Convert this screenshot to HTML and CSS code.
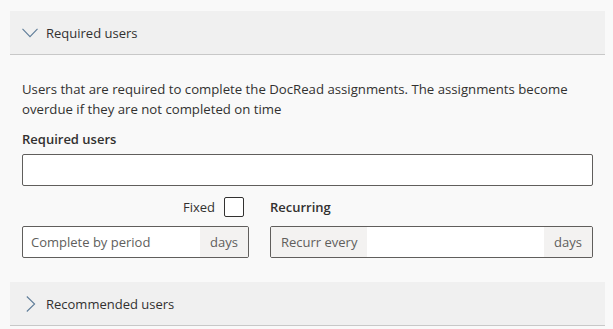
FILE: index.html
```html
<!DOCTYPE html>
<html>
<head>
<meta charset="utf-8">
<link rel="stylesheet" href="styles.css">
</head>
<body>
<div class="page">
  <div class="section">
    <div class="section-header">
      <svg class="chev" width="16" height="10" viewBox="0 0 16 10"><path d="M0.5 0.8 L8 8.6 L15.5 0.8" fill="none" stroke="#5f7d99" stroke-width="1.1"/></svg>
      <span class="section-title">Required users</span>
    </div>
    <div class="section-body">
      <p class="desc">Users that are required to complete the DocRead assignments. The assignments become overdue if they are not completed on time</p>
      <div class="label">Required users</div>
      <div class="field"><input class="input" type="text"></div>
      <div class="grid">
        <div class="col col-left">
          <div class="fixed-row">
            <span class="fixed-label">Fixed</span>
            <span class="checkbox"></span>
          </div>
          <div class="field field-group">
            <input class="input flex" type="text" placeholder="Complete by period">
            <span class="suffix">days</span>
          </div>
        </div>
        <div class="col">
          <div class="label label-inline">Recurring</div>
          <div class="field field-group">
            <span class="prefix">Recurr every</span>
            <input class="input flex" type="text">
            <span class="suffix">days</span>
          </div>
        </div>
      </div>
    </div>
  </div>
  <div class="section collapsed">
    <div class="section-header">
      <svg class="chev chev-right" width="10" height="16" viewBox="0 0 10 16"><path d="M0.8 0.5 L8.6 8 L0.8 15.5" fill="none" stroke="#5f7d99" stroke-width="1.1"/></svg>
      <span class="section-title">Recommended users</span>
    </div>
  </div>
</div>
</body>
</html>
```
FILE: styles.css
```css
* { box-sizing: border-box; }
html, body { margin: 0; padding: 0; }
body {
  background: #f9f9f9;
  font-family: "Open Sans", "Noto Sans", sans-serif;
  font-size: 13px;
  color: #323130;
  width: 613px;
  height: 329px;
  overflow: hidden;
}
.page {
  padding: 11px 8px 0 10px;
}
.section-header {
  height: 44px;
  background: #f0f0f0;
  border-bottom: 1px solid #c8c8c8;
  display: flex;
  align-items: center;
  padding-left: 12px;
}
.chev { display: block; margin-right: 8px; margin-top: 1px; }
.chev-right { margin-left: 4px; margin-right: 10px; }
.section-title {
  font-size: 13px;
  color: #323130;
}
.section-body {
  padding: 24px 12px 24px 12px;
}
.desc {
  margin: 0;
  line-height: 20px;
  font-size: 13.2px;
}
.label {
  font-weight: 600;
  line-height: 20px;
  margin-top: 10px;
  margin-bottom: 5px;
}
.field {
  display: flex;
  height: 32px;
  border: 1px solid #605e5c;
  border-radius: 2px;
  background: #fff;
  overflow: hidden;
}
.input {
  border: none;
  outline: none;
  background: transparent;
  width: 100%;
  height: 100%;
  padding: 0 8px;
  font: inherit;
  color: #323130;
}
.input::placeholder { color: #605e5c; }
.flex { flex: 1; min-width: 0; }
.grid {
  display: grid;
  grid-template-columns: 227px 323px;
  column-gap: 21px;
  margin-top: 11px;
}
.col { display: flex; flex-direction: column; }
.fixed-row {
  display: flex;
  justify-content: flex-end;
  align-items: center;
  height: 20px;
  padding-right: 5px;
  margin-bottom: 9px;
}
.fixed-label { margin-right: 9px; color: #323130; }
.checkbox {
  width: 20px;
  height: 20px;
  border: 1px solid #323130;
  border-radius: 2px;
  background: #fff;
}
.label-inline {
  margin-top: 0;
  margin-bottom: 9px;
}
.suffix, .prefix {
  background: #f3f2f1;
  color: #605e5c;
  display: flex;
  align-items: center;
  padding: 0 10px;
  white-space: nowrap;
}
.suffix { width: 48px; justify-content: center; padding: 0; }
.prefix { width: 96px; }
.collapsed .section-header { height: 44px; }
```
